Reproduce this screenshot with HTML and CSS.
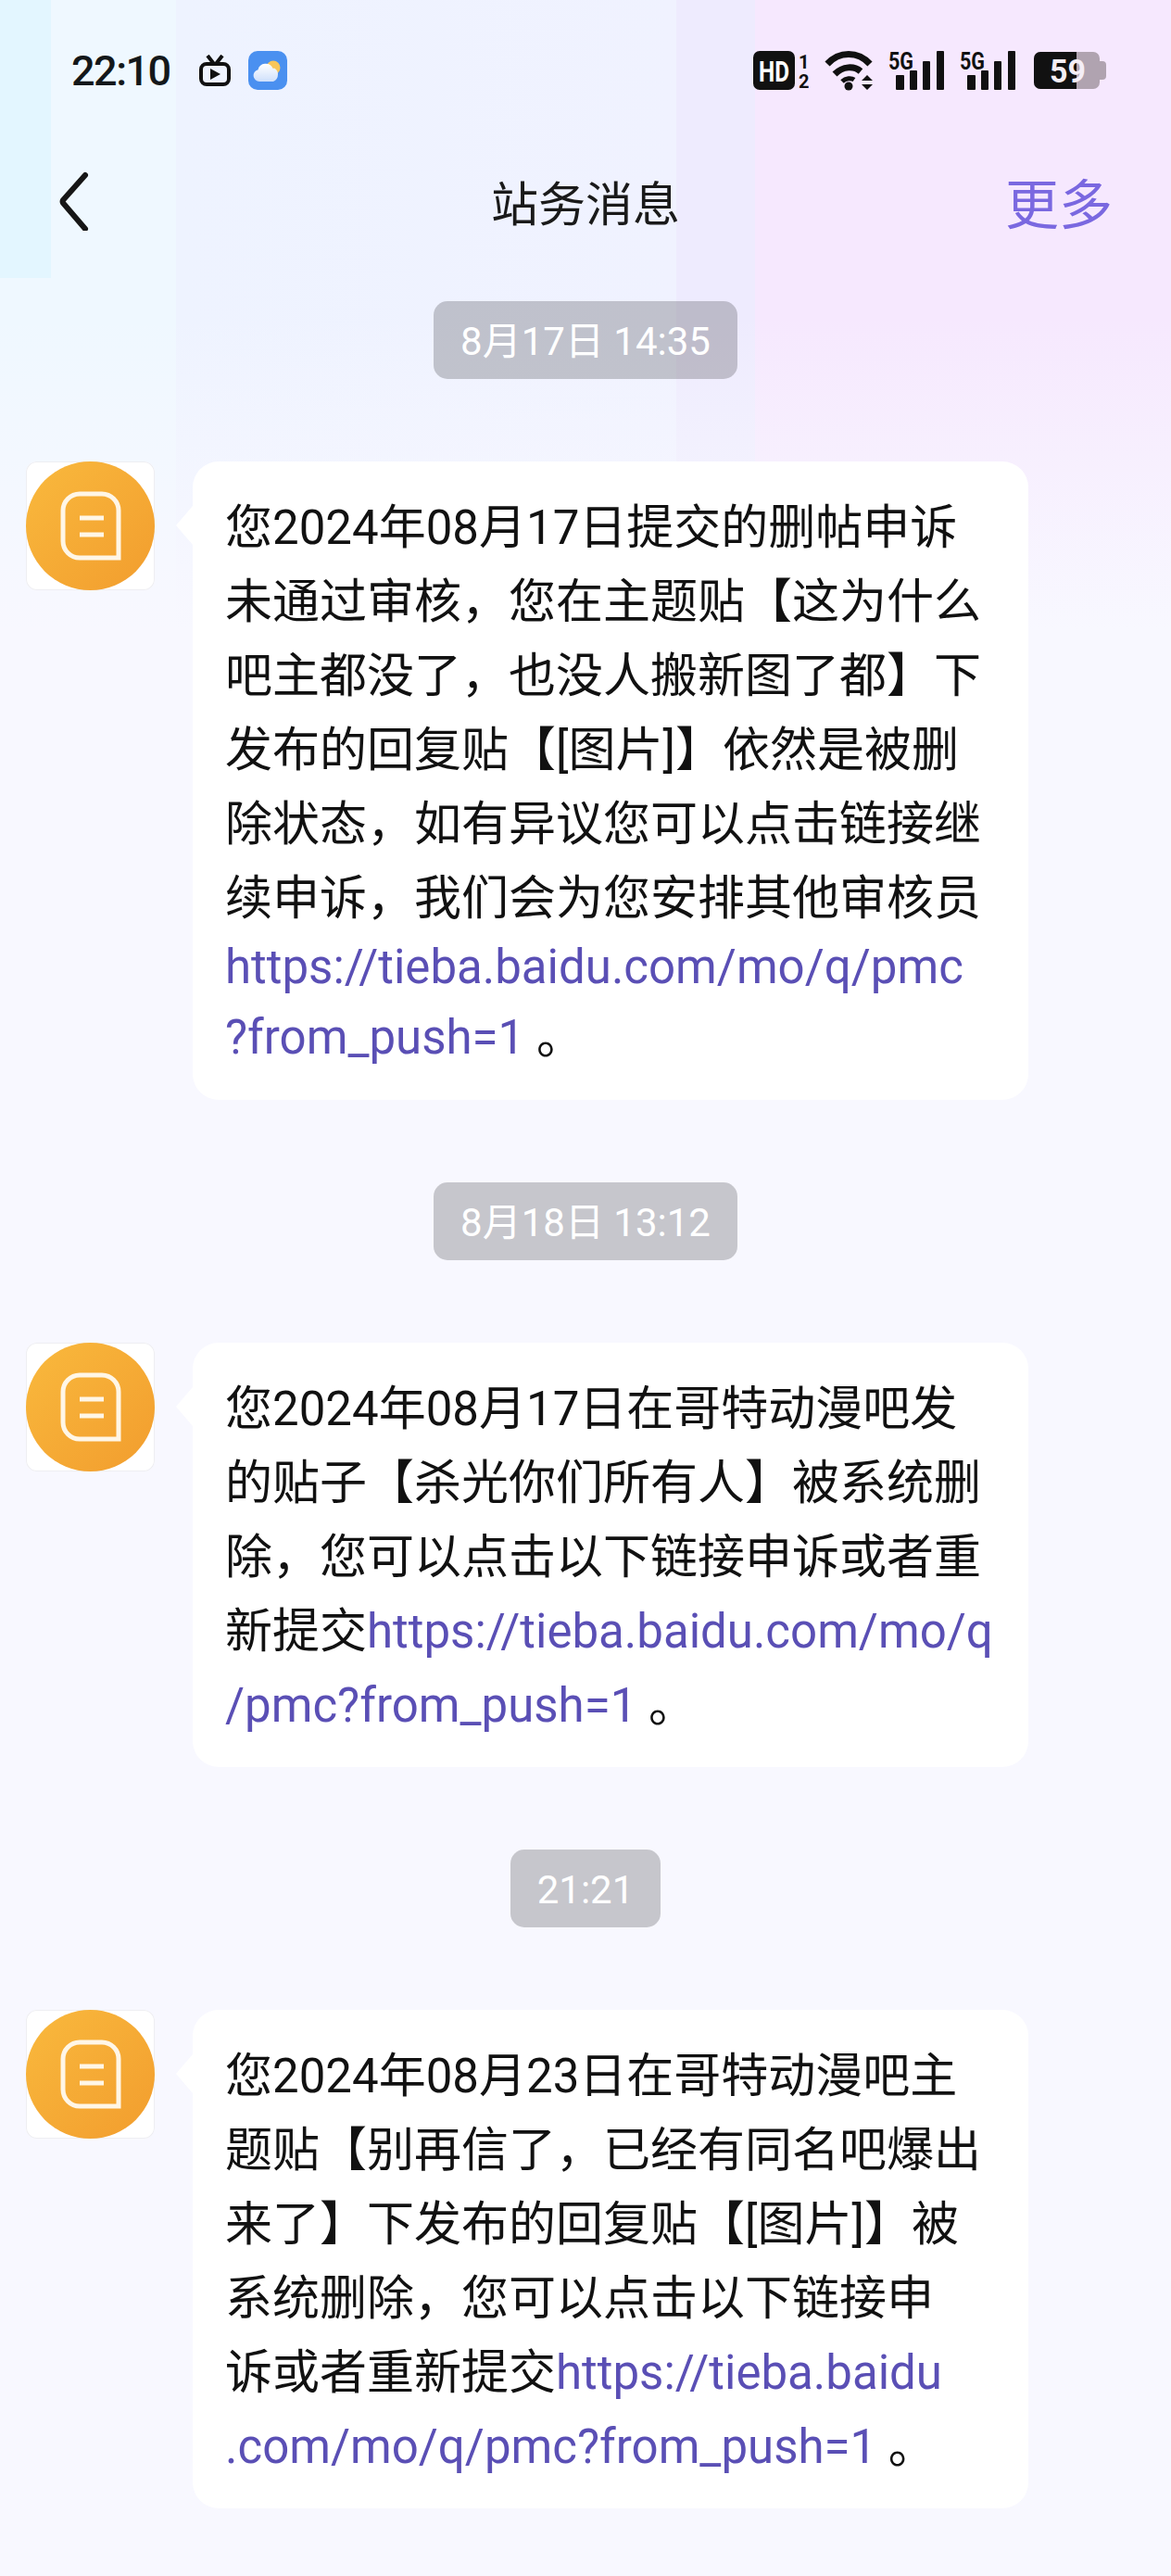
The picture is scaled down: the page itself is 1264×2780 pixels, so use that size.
FILE: index.html
```html
<!DOCTYPE html>
<html lang="zh-CN">

<head>
  <meta charset="UTF-8" />
  <meta name="viewport" content="width=device-width, initial-scale=1.0" />
  <title>站务消息</title>
  <link rel="stylesheet" href="styles.css">
</head>

<body>
  <svg class="defs" width="0" height="0">
    <defs>
      <linearGradient id="orange" x1="0" y1="0" x2="1" y2="1">
        <stop offset="0" stop-color="#f9b93d" />
        <stop offset="1" stop-color="#f29d2e" />
      </linearGradient>
      <linearGradient id="cloud" x1="0" y1="0" x2="0" y2="1">
        <stop offset="0" stop-color="#ffffff" />
        <stop offset="1" stop-color="#cfe0fb" />
      </linearGradient>
      <symbol id="notice" viewBox="0 0 139 139">
        <circle cx="69.5" cy="69.5" r="69.5" fill="url(#orange)" />
        <path d="M100 104H58a18 18 0 0 1-18-18V53a18 18 0 0 1 18-18h24a18 18 0 0 1 18 18z" fill="none" stroke="#fff6e6" stroke-width="5" />
        <path d="M58 61h26M58 79h26" fill="none" stroke="#fff6e6" stroke-width="5" />
      </symbol>
      <symbol id="signal" viewBox="0 0 60 46">
        <text class="tiny-g" x="0" y="22" textLength="27" lengthAdjust="spacingAndGlyphs">5G</text>
        <rect x="8" y="28" width="9" height="16" rx="1" />
        <rect x="23" y="23" width="8" height="21" rx="1" />
        <rect x="37" y="13" width="8" height="31" rx="1" />
        <rect x="52" y="2" width="8" height="42" rx="1" />
      </symbol>
    </defs>
  </svg>

  <div class="status">
    <div class="status-left">
      <span class="clock">22:10</span>
      <svg class="tv" width="34" height="34" viewBox="0 0 34 34">
        <rect x="2" y="10" width="30" height="22" rx="6" fill="none" stroke="#111" stroke-width="4" />
        <path d="M9 1l7 9M25 1l-7 9" fill="none" stroke="#111" stroke-width="4" />
        <path d="M12 15l11 6-11 6z" fill="#111" />
      </svg>
      <svg class="weather" width="42" height="42" viewBox="0 0 42 42">
        <rect width="42" height="42" rx="10" fill="#4a90f0" />
        <circle cx="27" cy="18" r="7.500" fill="#f9c65a" />
        <g fill="url(#cloud)">
          <path d="M12 33a6.500 6.500 0 0 1-1.500-12.800 8.500 8.500 0 0 1 16-1.500 6 6 0 0 1 2 .1 7.500 7.500 0 0 1 3.500 6.200q0 6-5 8z" />
        </g>
      </svg>
    </div>
    <div class="status-right">
      <svg width="60" height="48" viewBox="0 0 60 48">
        <rect y="3" width="45" height="42" rx="7" fill="#111" />
        <text class="hd" x="6" y="36" textLength="33" lengthAdjust="spacingAndGlyphs">HD</text>
        <text class="tiny" x="49" y="22">1</text>
        <text class="tiny" x="49" y="43">2</text>
      </svg>
      <svg width="52" height="44" viewBox="0 0 52 44">
        <path d="M3 15c13-14 33-14 46 0" fill="none" stroke="#111" stroke-width="7" />
        <path d="M11 26c9-9 21-9 28-3" fill="none" stroke="#111" stroke-width="7" />
        <path d="M19 34c4-4 10-4 13-2" fill="none" stroke="#111" stroke-width="5" />
        <circle cx="26" cy="39" r="4.500" fill="#111" />
        <path d="M46 27l6 6H40zM40 37h12l-6 6z" fill="#111" />
      </svg>
      <svg class="sig" width="60" height="46"><use href="#signal" /></svg>
      <svg class="sig" width="60" height="46"><use href="#signal" /></svg>
      <svg class="battery" width="78" height="44" viewBox="0 -2 78 44">
        <path d="M64 0h-57a7 7 0 0 0-7 7v26a7 7 0 0 0 7 7h57a7 7 0 0 0 7-7v-3h3a4 4 0 0 0 4-4v-12a4 4 0 0 0-4-4h-3v-3a7 7 0 0 0-7-7z" fill="#b0a3b0" />
        <path d="M46 0h-39a7 7 0 0 0-7 7v26a7 7 0 0 0 7 7h39z" fill="#111" />
        <text class="level" x="17" y="33" textLength="39" lengthAdjust="spacingAndGlyphs">59</text>
      </svg>
    </div>
  </div>

  <div class="nav">
    <svg class="back" width="34" height="64" viewBox="0 0 34 64">
      <path d="M29 4L5 31a3 3 0 0 0 0 3l24 28" fill="none" stroke="#161616" stroke-width="6" stroke-linecap="round" />
    </svg>
    <div class="nav-title">站务消息</div>
    <a class="nav-more">更多</a>
  </div>

  <div class="chat">
    <div class="time">8月17日 14:35</div>
    <div class="msg">
      <div class="avatar"><svg width="139" height="139"><use href="#notice" /></svg></div>
      <div class="bubble">
        <p>您2024年08月17日提交的删帖申诉</p>
        <p>未通过审核，您在主题贴【这为什么</p>
        <p>吧主都没了，也没人搬新图了都】下</p>
        <p>发布的回复贴【[图片]】依然是被删</p>
        <p>除状态，如有异议您可以点击链接继</p>
        <p>续申诉，我们会为您安排其他审核员</p>
        <p class="url-line url-first"><a>https://tieba.baidu.com/mo/q/pmc</a></p>
        <p class="url-line url-last"><a>?from_push=1</a> 。</p>
      </div>
    </div>

    <div class="time">8月18日 13:12</div>
    <div class="msg">
      <div class="avatar"><svg width="139" height="139"><use href="#notice" /></svg></div>
      <div class="bubble">
        <p>您2024年08月17日在哥特动漫吧发</p>
        <p>的贴子【杀光你们所有人】被系统删</p>
        <p>除，您可以点击以下链接申诉或者重</p>
        <p>新提交<a>https://tieba.baidu.com/mo/q</a></p>
        <p><a>/pmc?from_push=1</a> 。</p>
      </div>
    </div>

    <div class="time">21:21</div>
    <div class="msg">
      <div class="avatar"><svg width="139" height="139"><use href="#notice" /></svg></div>
      <div class="bubble">
        <p>您2024年08月23日在哥特动漫吧主</p>
        <p>题贴【别再信了，已经有同名吧爆出</p>
        <p>来了】下发布的回复贴【[图片]】被</p>
        <p>系统删除，您可以点击以下链接申</p>
        <p>诉或者重新提交<a>https://tieba.baidu</a></p>
        <p><a>.com/mo/q/pmc?from_push=1</a> 。</p>
      </div>
    </div>
  </div>
</body>

</html>
```

FILE: styles.css
```css
html,
body {
  margin: 0;
}

body {
  min-height: 2780px;
  font-family: Roboto, 'Noto Sans CJK SC', sans-serif;
  color: #111;
  background-color: #f8f8ff;
  background-image:
    linear-gradient(90deg, #e3f6ff 0 55px, transparent 55px),
    linear-gradient(180deg, rgba(248, 248, 255, 0) 340px, #f8f8ff 680px),
    linear-gradient(90deg, #eff8ff 0 190px, #eef3ff 190px, #f0f2ff 730px, #eeebfe 730px 815px, #f6e8fe 815px);
  background-size: 100% 300px, 100% 100%, 100% 100%;
  background-repeat: no-repeat;
}

.defs {
  display: block;
}

.status {
  display: flex;
  justify-content: space-between;
  align-items: center;
  box-sizing: border-box;
  height: 152px;
  padding: 52px 70px 52px 77px;
}

.status-left,
.status-right {
  display: flex;
  align-items: center;
}

.status-right {
  gap: 17px;
}

.clock {
  font-size: 45px;
  font-weight: 500;
  letter-spacing: -1.500px;
  color: #14181a;
}

.tv {
  margin-left: 31px;
}

.weather {
  margin-left: 19px;
}

.battery {
  margin-left: 3px;
}

.sig {
  fill: #111;
}

.tiny {
  font-size: 20px;
  font-weight: 700;
  fill: #111;
}

.tiny-g {
  font-size: 26px;
  font-weight: 700;
  fill: #111;
}

.hd {
  font-size: 32px;
  font-weight: 700;
  fill: #fff;
}

.level {
  font-size: 35px;
  font-weight: 700;
  fill: #f4eef6;
}

.nav {
  display: grid;
  grid-template-columns: 1fr auto 1fr;
  align-items: center;
  height: 129px;
  padding: 0 63px;
}

.nav-title {
  font-size: 51px;
  color: #1a1a1a;
}

.nav-more {
  justify-self: end;
  font-size: 58px;
  color: #7a68e0;
}

.chat {
  display: flex;
  flex-direction: column;
  gap: 89px;
  padding: 44px 0 0 28px;
}

.time {
  align-self: center;
  margin-left: -28px;
  box-sizing: border-box;
  height: 84px;
  padding: 3px 29px 0;
  border-radius: 15px;
  font-size: 42px;
  line-height: 81px;
  color: #fff;
  background: rgba(0, 0, 0, .2);
}

.msg {
  display: flex;
  align-items: flex-start;
  gap: 41px;
}

.avatar {
  width: 139px;
  height: 139px;
  border-radius: 12px;
  background: #fff;
  box-shadow: inset 0 0 0 1px #eeeef2;
}

.avatar svg {
  display: block;
}

.bubble {
  position: relative;
  box-sizing: border-box;
  width: 902px;
  padding: 32px 0 26px 35px;
  border-radius: 28px;
  background: #fff;
}

/* little pointer towards the avatar */
.bubble::before {
  content: "";
  position: absolute;
  left: -18px;
  top: 48px;
  width: 18px;
  height: 42px;
  background: #fff;
  clip-path: polygon(100% 0, 0 50%, 100% 100%);
}

.bubble p {
  margin: 0;
  height: 80px;
  font-size: 51px;
  line-height: 80px;
  white-space: nowrap;
}

.bubble p.url-line {
  height: 76px;
  line-height: 76px;
}

.bubble p.url-first {
  margin-top: -4px;
}

.bubble p.url-last {
  margin-bottom: 3px;
}

.bubble a {
  color: #5a4fb5;
}
```
